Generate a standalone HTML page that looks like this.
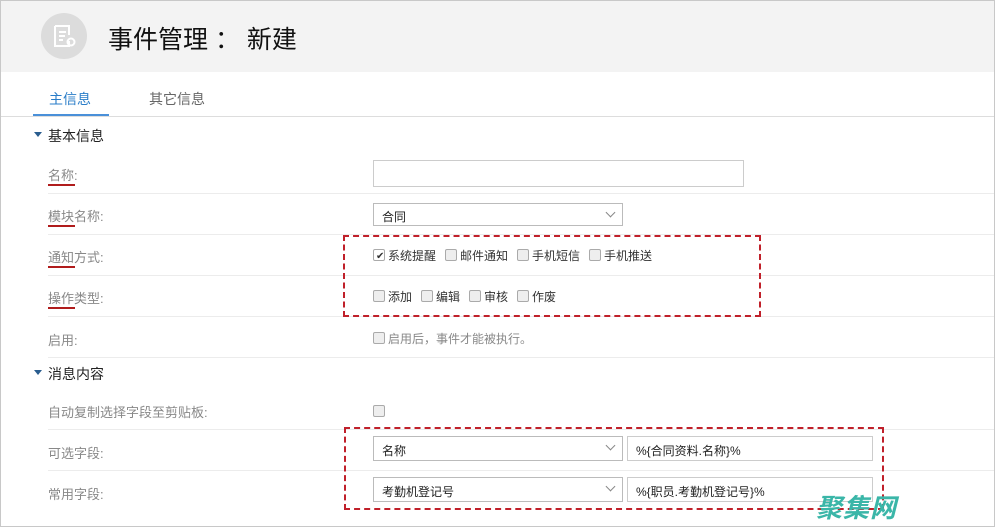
<!DOCTYPE html>
<html><head><meta charset="utf-8"><style>
*{margin:0;padding:0;box-sizing:border-box}
body{width:995px;height:527px;overflow:hidden;background:#fff;font-family:"Liberation Sans","Noto Sans CJK SC",sans-serif;font-size:13px;color:#333;position:relative}
.a{position:absolute}
.frame{left:0;top:0;width:995px;height:527px;border:1px solid #c8c8c8}
.hdr{left:1px;top:1px;width:993px;height:71px;background:#f3f3f3}
.lbl{left:48px;color:#888;font-size:13px}
.ul{left:48px;width:27px;height:2px;background:#b01c1c}
.line{left:48px;right:1px;height:1px;background:#ececec}
.cb{width:12px;height:12px;border:1px solid #aaa;background:#eee;border-radius:2px;display:inline-block;vertical-align:-1px;margin-right:3px}
.opt{font-size:12px;color:#333}
.opt span{margin-right:9px}
.sel{border:1px solid #bbb;background:#fff;height:23px;font-size:12px;padding:4px 8px;color:#222}
.sel:after{content:"";position:absolute;right:8px;top:5px;width:6px;height:6px;border-right:1px solid #888;border-bottom:1px solid #888;transform:rotate(45deg)}
.inp{border:1px solid #ccc;background:#fff;height:25px;font-size:12px;padding:5px 8px;color:#222}
.dash{border:2px dashed #c0202a}
.sec{left:48px;font-size:14px;color:#222}
.tri{left:34px;width:0;height:0;border-left:4px solid transparent;border-right:4px solid transparent;border-top:5px solid #2a5d8f}
</style></head><body>
<div class="a frame"></div>
<div class="a hdr"></div>
<div class="a" style="left:41px;top:13px;width:46px;height:46px;border-radius:50%;background:#dcdcdc"></div>
<svg class="a" style="left:52px;top:24px" width="26" height="26" viewBox="0 0 26 26" fill="none" stroke="#fff" stroke-width="2"><path d="M3 2h14v9M17 17v5H3V2"/><path d="M7 8h7M7 12h6M7 16h4"/><circle cx="19" cy="18" r="3.5"/></svg>
<div class="a" style="left:108px;top:20px;font-size:25px;color:#111">事件管理 ： 新建</div>
<div class="a" style="left:49px;top:89px;font-size:14px;color:#2a7dc8">主信息</div>
<div class="a" style="left:149px;top:89px;font-size:14px;color:#666">其它信息</div>
<div class="a" style="left:33px;top:114px;width:76px;height:2px;background:#4a90d9"></div>
<div class="a" style="left:1px;top:116px;width:993px;height:1px;background:#ddd"></div>
<div class="a tri" style="top:132px"></div>
<div class="a sec" style="top:126px">基本信息</div>
<div class="a lbl" style="top:165px">名称:</div><div class="a ul" style="top:184px"></div>
<div class="a line" style="top:193px"></div>
<input class="a inp" style="left:373px;top:160px;width:371px;height:27px">
<div class="a lbl" style="top:206px">模块名称:</div><div class="a ul" style="top:225px"></div>
<div class="a line" style="top:234px"></div>
<div class="a sel" style="left:373px;top:203px;width:250px">合同</div>
<div class="a lbl" style="top:247px">通知方式:</div><div class="a ul" style="top:266px"></div>
<div class="a line" style="top:275px"></div>
<div class="a opt" style="left:373px;top:247px"><span><i class="cb" style="background:#fff;position:relative"></i>系统提醒</span><span><i class="cb"></i>邮件通知</span><span><i class="cb"></i>手机短信</span><span><i class="cb"></i>手机推送</span></div>
<div class="a" style="left:376px;top:251px;font-size:10px;color:#333">✔</div>
<div class="a lbl" style="top:288px">操作类型:</div><div class="a ul" style="top:307px"></div>
<div class="a line" style="top:316px"></div>
<div class="a opt" style="left:373px;top:288px"><span><i class="cb"></i>添加</span><span><i class="cb"></i>编辑</span><span><i class="cb"></i>审核</span><span><i class="cb"></i>作废</span></div>
<div class="a lbl" style="top:330px">启用:</div>
<div class="a line" style="top:357px"></div>
<div class="a opt" style="left:373px;top:330px;color:#888"><i class="cb"></i>启用后，事件才能被执行。</div>
<div class="a tri" style="top:370px"></div>
<div class="a sec" style="top:364px">消息内容</div>
<div class="a lbl" style="top:402px">自动复制选择字段至剪贴板:</div>
<div class="a line" style="top:429px"></div>
<div class="a" style="left:373px;top:404px"><i class="cb"></i></div>
<div class="a lbl" style="top:443px">可选字段:</div>
<div class="a line" style="top:470px"></div>
<div class="a sel" style="left:373px;top:436px;width:250px;height:25px;padding-top:5px">名称</div>
<div class="a inp" style="left:627px;top:436px;width:246px">%{合同资料.名称}%</div>
<div class="a lbl" style="top:484px">常用字段:</div>
<div class="a sel" style="left:373px;top:477px;width:250px;height:25px;padding-top:5px">考勤机登记号</div>
<div class="a inp" style="left:627px;top:477px;width:246px">%{职员.考勤机登记号}%</div>
<div class="a dash" style="left:343px;top:235px;width:418px;height:82px"></div>
<div class="a dash" style="left:344px;top:427px;width:540px;height:83px"></div>
<div class="a" style="left:816px;top:488px;font-size:26px;font-weight:bold;font-style:italic;color:#3ab6a8;letter-spacing:1px">聚集网</div>
</body></html>
